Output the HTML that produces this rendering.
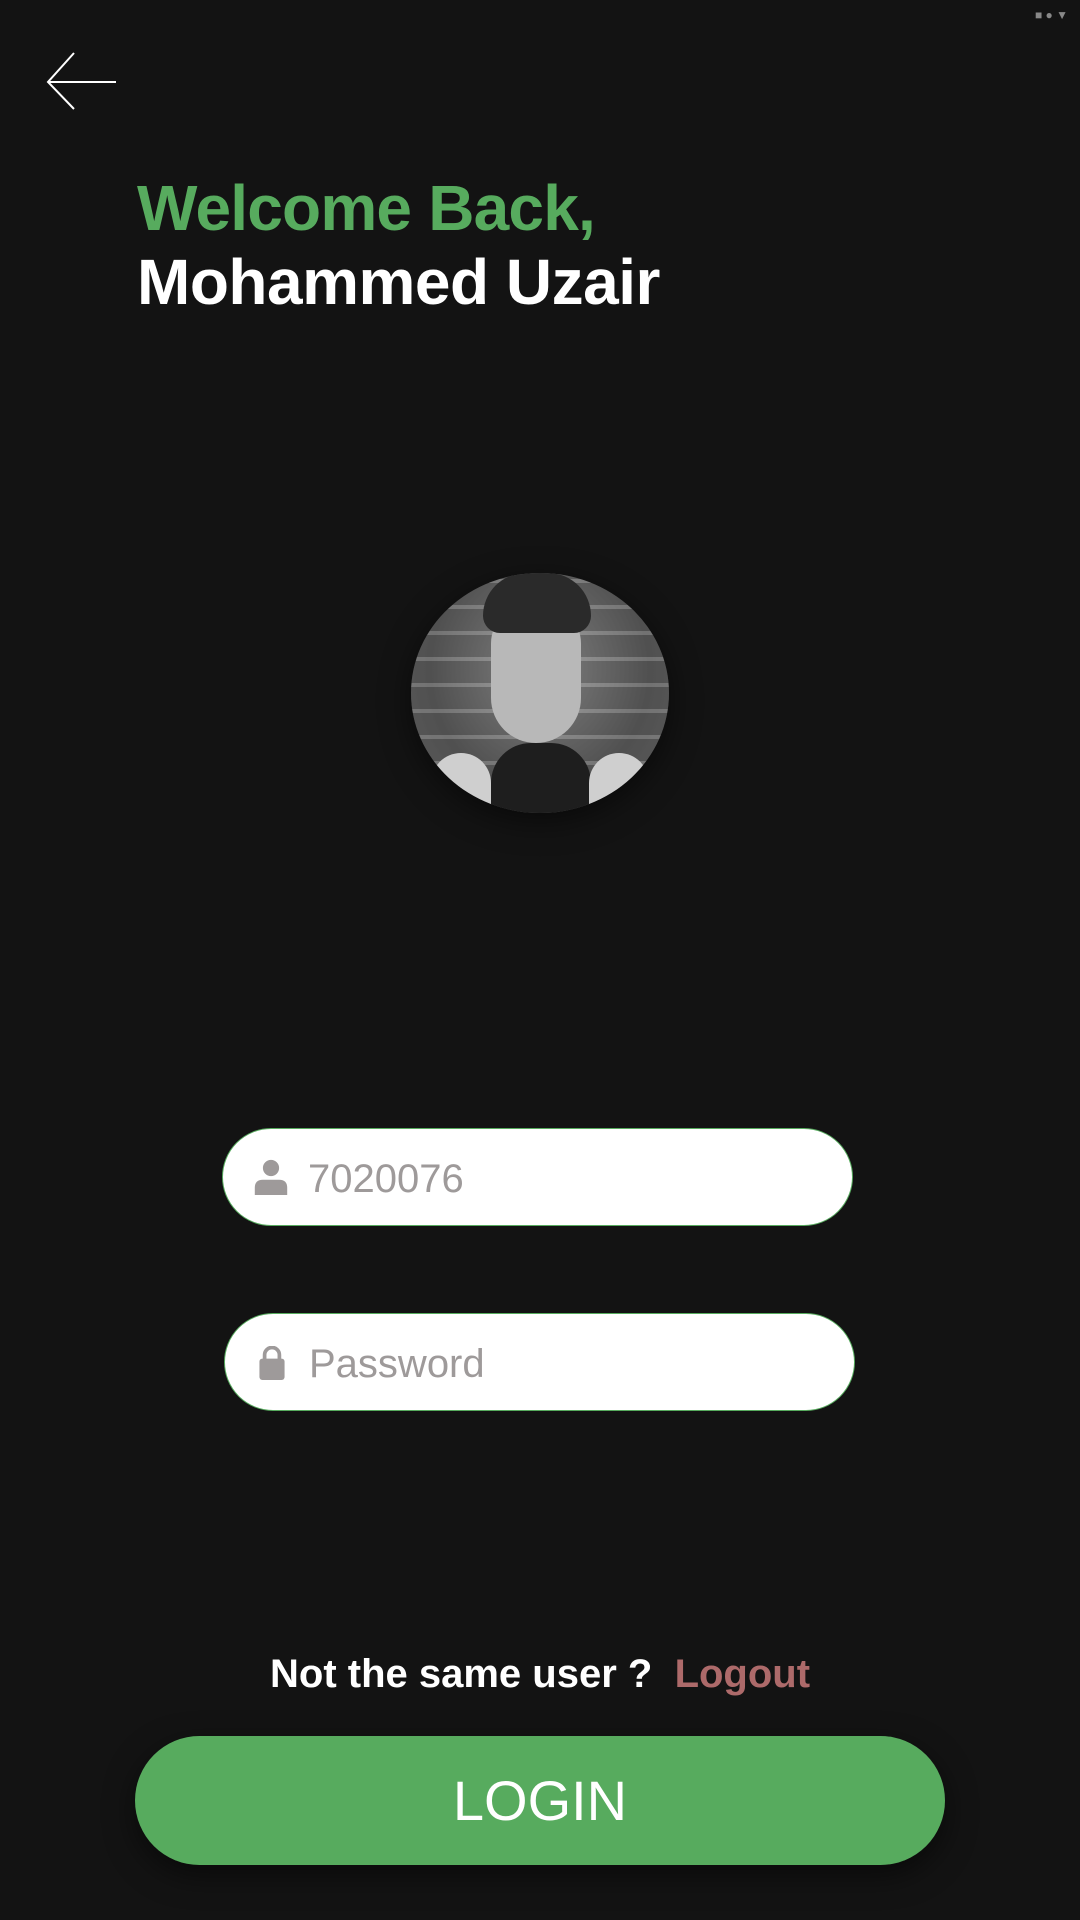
<!DOCTYPE html>
<html><head><meta charset="utf-8"><style>
html,body{margin:0;padding:0;}
body{width:1080px;height:1920px;background:#131313;position:relative;overflow:hidden;font-family:"Liberation Sans",Arial,sans-serif;}
.abs{position:absolute;}
.t1{left:137px;top:172px;font-size:64px;font-weight:bold;color:#57ab5e;line-height:72px;letter-spacing:-0.8px;}
.t2{left:137px;top:246px;font-size:64px;font-weight:bold;color:#fff;line-height:72px;letter-spacing:-0.5px;}
.av{left:411px;top:573px;width:258px;height:240px;border-radius:50%;background:radial-gradient(ellipse at 50% 40%,#9a9a9a 0,#6a6a6a 30%,#3a3a3a 60%,#555 100%);overflow:hidden;box-shadow:0 8px 30px rgba(0,0,0,.5);}
.inp{background:#fff;border:1.5px solid #57ab5e;border-radius:50px;height:96px;}
.ph{font-size:40px;color:#9e9a9a;top:26px;left:85px;line-height:48px;}
</style></head><body>
<div class="abs" style="right:12px;top:8px;color:#888;font-size:12px;">■ ● ▼</div>
<svg class="abs" style="left:44px;top:50px" width="76" height="62" viewBox="0 0 76 62"><path d="M72 32H4M30 3L4 32L30 59" stroke="#fff" stroke-width="2" fill="none"/></svg>
<div class="abs t1">Welcome Back,</div>
<div class="abs t2">Mohammed Uzair</div>
<div class="abs av">
 <div class="abs" style="left:0;top:0;width:258px;height:240px;background:repeating-linear-gradient(0deg,#666 0 22px,#aaa 22px 26px);opacity:.5"></div>
 <div class="abs" style="left:80px;top:170px;width:100px;height:80px;background:#1e1e1e;border-radius:40px 40px 0 0"></div>
 <div class="abs" style="left:20px;top:180px;width:60px;height:60px;background:#cfcfcf;border-radius:30px 30px 0 0"></div>
 <div class="abs" style="left:178px;top:180px;width:60px;height:60px;background:#cfcfcf;border-radius:30px 30px 0 0"></div>
 <div class="abs" style="left:80px;top:30px;width:90px;height:140px;background:#b8b8b8;border-radius:45px 45px 50px 50px"></div>
 <div class="abs" style="left:72px;top:0px;width:108px;height:60px;background:#2a2a2a;border-radius:50px 50px 20px 20px"></div>
</div>
<div class="abs inp" style="left:222px;top:1128px;width:629px;">
 <svg class="abs" style="left:29px;top:30px" width="38" height="36" viewBox="0 0 38 40"><circle cx="19" cy="10" r="9" fill="#9e9a9a"/><path d="M1 40V32Q1 23 10 23H28Q37 23 37 32V40Z" fill="#9e9a9a"/></svg>
 <div class="abs ph">7020076</div>
</div>
<div class="abs inp" style="left:224px;top:1313px;width:629px;">
 <svg class="abs" style="left:30px;top:32px" width="34" height="34" viewBox="0 0 34 46"><path d="M7 18V12a10 10 0 0 1 20 0v6" stroke="#9e9a9a" stroke-width="5" fill="none"/><rect x="0" y="17" width="34" height="29" rx="4" fill="#9e9a9a"/></svg>
 <div class="abs ph" style="left:84px">Password</div>
</div>
<div class="abs" style="left:270px;top:1652px;font-size:40px;font-weight:bold;color:#fff;white-space:nowrap;">Not the same user ?&nbsp; <span style="color:#ad6a6a">Logout</span></div>
<div class="abs" style="left:135px;top:1736px;width:810px;height:129px;border-radius:65px;background:#57ab5e;box-shadow:0 10px 30px rgba(0,0,0,.5);color:#fff;font-size:56px;text-align:center;line-height:129px;">LOGIN</div>
</body></html>
